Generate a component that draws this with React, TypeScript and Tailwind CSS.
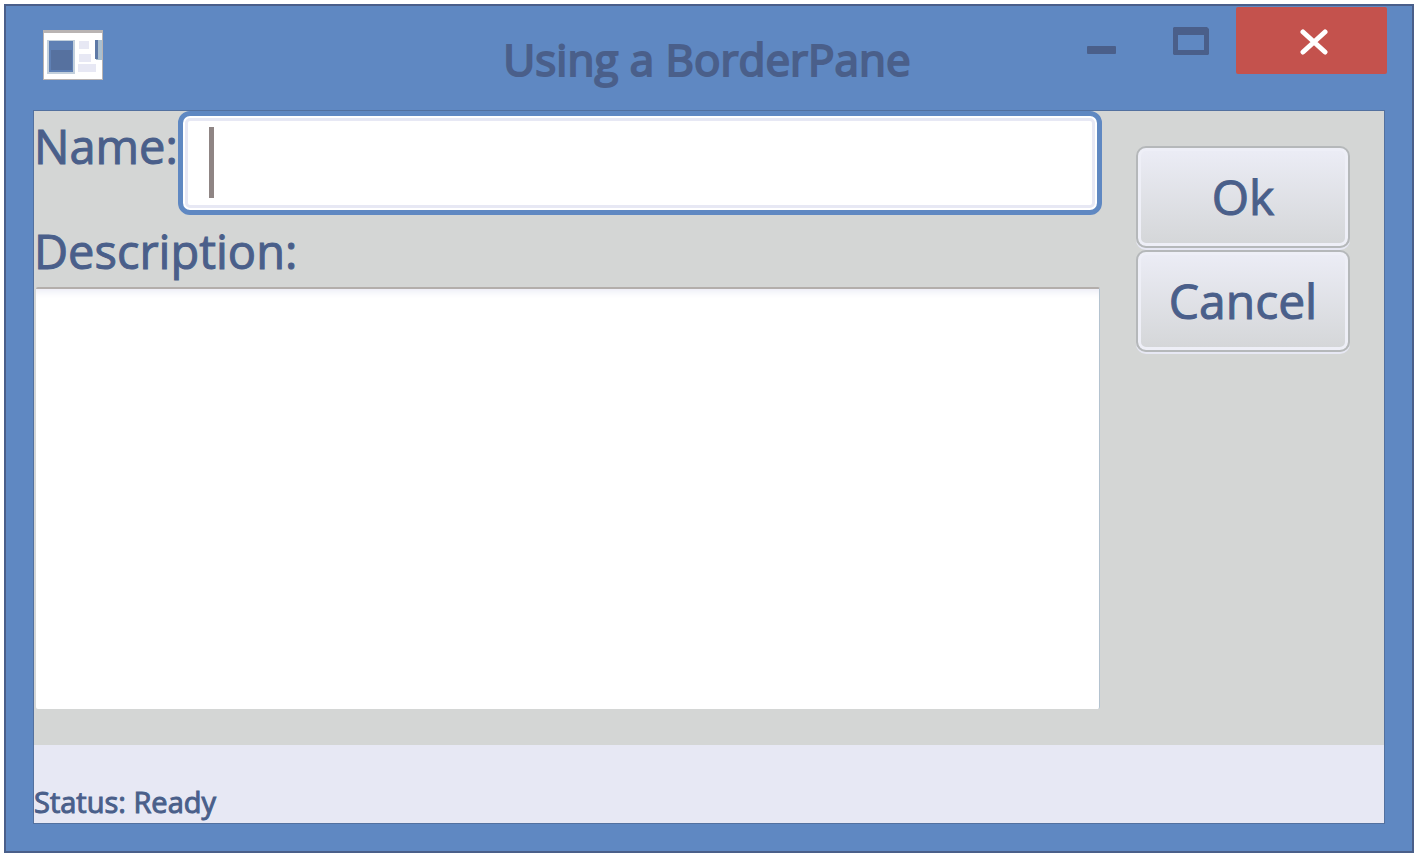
import { useState } from "react";
import type { ReactNode } from "react";

function WindowIcon() {
  return (
    <svg width="62" height="52" viewBox="0 0 62 52" aria-hidden="true">
      <rect x="1" y="0" width="60" height="50" fill="#b9b4b3" />
      <rect x="2" y="3" width="58" height="46" fill="#ffffff" />
      <rect x="5" y="10" width="28" height="34" fill="#c3d0dc" />
      <rect x="7" y="11" width="24" height="31" fill="#5f80b4" />
      <rect x="9" y="20" width="21" height="20" fill="#56719f" />
      <path d="M37 11h10v8H37zM37 24h12v8H37zM36 34h18v8H36z" fill="#e7e8f4" />
      <rect x="54" y="10" width="6" height="20" fill="#a9bfd0" />
      <rect x="53" y="10" width="3" height="19" fill="#5d79a6" />
    </svg>
  );
}

function TitleBar() {
  return (
    <header className="grid h-[105px] grid-cols-[1fr_auto_1fr] items-start">
      <div className="pt-6 pl-9">
        <WindowIcon />
      </div>
      <h1 className="pt-[23px] pr-1 text-[44px] leading-[60px] [-webkit-text-stroke:2px_#4a5f8a]">Using a BorderPane</h1>
      <div className="flex justify-end pt-px pr-[25px]">
        <button type="button" aria-label="Minimize" className="flex h-[67px] w-[88px] items-center justify-center">
          <svg width="30" height="30" viewBox="0 0 30 30" aria-hidden="true">
            <rect x="0" y="20" width="29" height="8" rx="1" fill="#4a5f8a" />
          </svg>
        </button>
        <button type="button" aria-label="Maximize" className="flex h-[67px] w-[90px] items-center justify-center">
          <svg width="36" height="28" viewBox="0 0 36 28" aria-hidden="true">
            <path fillRule="evenodd" d="M1 0H34L36 2V27L35 28H1L0 27V1ZM5 8V23H31V8Z" fill="#4a5f8a" />
          </svg>
        </button>
        <button
          type="button"
          aria-label="Close"
          className="flex h-[67px] w-[151px] items-center justify-center rounded-xs bg-[#c4524d]"
        >
          <svg width="28" height="26" viewBox="0 0 28 26" className="mt-0.5 ml-1" aria-hidden="true">
            <path d="M3 3L25 23M25 3L3 23" stroke="#ffffff" strokeWidth="5" strokeLinecap="round" />
          </svg>
        </button>
      </div>
    </header>
  );
}

function PaneButton({ children }: { children: ReactNode }) {
  return (
    <button
      type="button"
      className="h-[102px] w-full rounded-[10px] border-2 border-[#b5b8ba] bg-linear-to-b from-[#ecedf6] to-[#d4d6d8] text-[48px] leading-[60px] shadow-[inset_0_0_0_3px_#eeeff7,0_2px_0_#e7e8f4] [-webkit-text-stroke:1px_#4a5f8a]"
    >
      {children}
    </button>
  );
}

export default function App() {
  const [name, setName] = useState("");
  const [description, setDescription] = useState("");

  return (
    <div className="flex min-h-screen bg-white p-1 font-['Open_Sans','Noto_Sans',sans-serif] text-[#4a5f8a]">
      <div className="flex flex-1 flex-col border-2 border-[#4a5f8a] bg-[#5f88c2]">
        <TitleBar />
        <div className="mx-7 mb-7 flex flex-1 flex-col outline outline-[#53719f]">
          <main className="flex flex-1 bg-[#d4d6d5]">
            <form className="flex flex-1 flex-col pb-9" onSubmit={(e) => e.preventDefault()}>
              <div className="flex items-start">
                <label
                  htmlFor="name"
                  className="w-36 shrink-0 pt-1 text-[47px] leading-[62px] [-webkit-text-stroke:1px_#4a5f8a]"
                >
                  Name:
                </label>
                <div className="relative flex-1">
                  <input
                    id="name"
                    value={name}
                    onChange={(e) => setName(e.target.value)}
                    className="block h-[104px] w-full rounded-xl border-[5px] border-[#5f88c2] bg-white px-7 text-[47px] caret-transparent shadow-[inset_0_0_0_2px_#ffffff,inset_0_0_0_5px_#e7e8f4] outline-none"
                  />
                  {name === "" && <span className="absolute top-4 left-[31px] h-[71px] w-[5px] bg-[#8f8584]" />}
                </div>
              </div>
              <label
                htmlFor="description"
                className="pt-1 text-[47px] leading-[64px] [-webkit-text-stroke:1px_#4a5f8a]"
              >
                Description:
              </label>
              <textarea
                id="description"
                value={description}
                onChange={(e) => setDescription(e.target.value)}
                className="mt-1 mr-0.5 ml-0.5 flex-1 resize-none rounded-xs border-t-2 border-r border-t-[#b3aeab] border-r-[#b4c3cf] bg-white px-7 py-3 text-[47px] shadow-[inset_0_8px_8px_-6px_#e7e8f4] outline-none"
              />
            </form>
            <aside className="flex w-[282px] flex-col gap-0.5 pt-[35px] pr-[34px] pl-[34px]">
              <PaneButton>Ok</PaneButton>
              <PaneButton>Cancel</PaneButton>
            </aside>
          </main>
          <footer className="flex h-[78px] items-end bg-[#e7e8f4] text-[29px] leading-[42px] [-webkit-text-stroke:1px_#4a5f8a]">
            Status: Ready
          </footer>
        </div>
      </div>
    </div>
  );
}
